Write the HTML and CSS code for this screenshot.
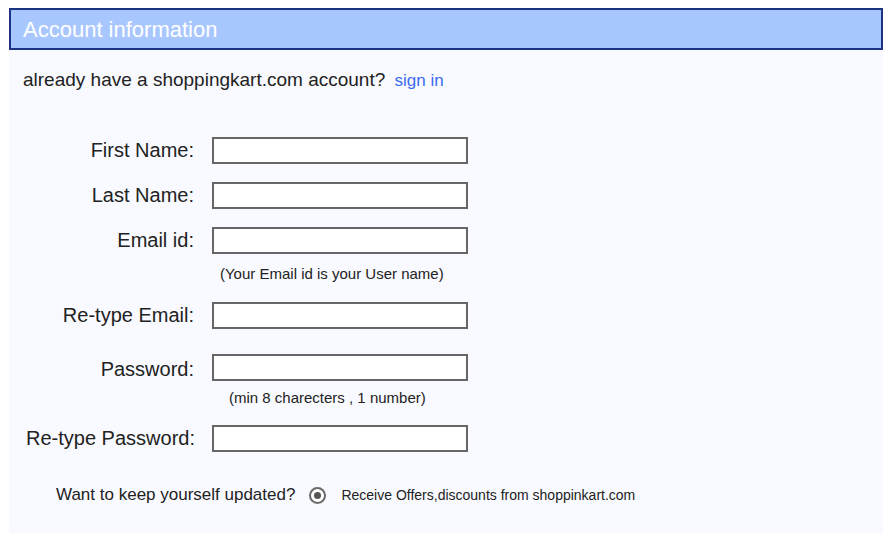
FILE: index.html
```html
<!DOCTYPE html>
<html>
<head>
<meta charset="utf-8">
<link rel="stylesheet" href="styles.css">
</head>
<body>
<div class="panel">
  <div class="panel-header">Account information</div>
  <p class="intro">already have a shoppingkart.com account? <a class="signin" href="#">sign in</a></p>
  <form class="form">
    <div class="row row-first">
      <label class="label">First Name:</label>
      <input class="field" type="text">
    </div>
    <div class="row row-gap">
      <label class="label">Last Name:</label>
      <input class="field" type="text">
    </div>
    <div class="row row-gap">
      <label class="label">Email id:</label>
      <input class="field" type="text">
    </div>
    <div class="hint hint-email">(Your Email id is your User name)</div>
    <div class="row row-after-hint">
      <label class="label">Re-type Email:</label>
      <input class="field" type="text">
    </div>
    <div class="row row-password">
      <label class="label label-low">Password:</label>
      <input class="field" type="password">
    </div>
    <div class="hint hint-password">(min 8 charecters , 1 number)</div>
    <div class="row row-after-hint2">
      <label class="label label-wide">Re-type Password:</label>
      <input class="field" type="password">
    </div>
    <div class="updates">
      <span class="updates-q">Want to keep yourself updated?</span>
      <span class="radio"><span class="radio-dot"></span></span>
      <span class="updates-opt">Receive Offers,discounts from shoppinkart.com</span>
    </div>
  </form>
</div>
</body>
</html>
```

FILE: styles.css
```css
html, body {
  background: #ffffff;
}
body {
  margin: 8px 9px;
  font-family: "Liberation Sans", Arial, sans-serif;
  color: #222222;
}
.panel {
  background: #f9faff;
  padding-bottom: 27px;
}
.panel-header {
  background: #a9c7ff;
  border: 2px solid #1b3382;
  height: 38px;
  line-height: 39px;
  padding: 0 12px;
  color: #ffffff;
  font-size: 22px;
}
.intro {
  margin: 19px 0 0 0;
  padding-left: 14px;
  font-size: 19px;
  line-height: 22px;
}
.signin {
  color: #3b6cf0;
  text-decoration: none;
  font-size: 17px;
  margin-left: 4px;
}
.form {
  display: flex;
  flex-direction: column;
  margin: 45px 0 0 0;
}
.row {
  display: flex;
  align-items: center;
  gap: 17px;
  height: 27px;
}
.row-gap { margin-top: 18px; }
.row-after-hint { margin-top: 19px; }
.row-password { margin-top: 25px; }
.row-after-hint2 { margin-top: 18px; }
.label {
  box-sizing: border-box;
  width: 186px;
  padding-right: 1px;
  padding-bottom: 2px;
  text-align: right;
  font-size: 20px;
  line-height: 24px;
  color: #222222;
}
.label-low {
  padding-bottom: 0;
  padding-top: 2px;
}
.label-wide {
  padding-right: 0;
}
.field {
  box-sizing: border-box;
  width: 256px;
  height: 27px;
  border: 2px solid #666666;
  background: #ffffff;
  margin: 0;
  padding: 0 4px;
  border-radius: 0;
  outline: none;
}
.hint {
  font-size: 15px;
  line-height: 18px;
  color: #222222;
}
.hint-email {
  margin-top: 11px;
  padding-left: 211px;
}
.hint-password {
  margin-top: 8px;
  padding-left: 220px;
}
.updates {
  display: flex;
  align-items: center;
  margin-top: 32px;
  padding-left: 47px;
  height: 22px;
}
.updates-q {
  font-size: 17px;
  color: #222222;
}
.radio {
  box-sizing: border-box;
  width: 17px;
  height: 17px;
  border: 2px solid #6a6a6a;
  border-radius: 50%;
  margin-left: 14px;
  display: flex;
  align-items: center;
  justify-content: center;
  background: #ffffff;
}
.radio-dot {
  width: 7px;
  height: 7px;
  border-radius: 50%;
  background: #555555;
}
.updates-opt {
  margin-left: 15px;
  font-size: 14px;
  color: #222222;
}
```
